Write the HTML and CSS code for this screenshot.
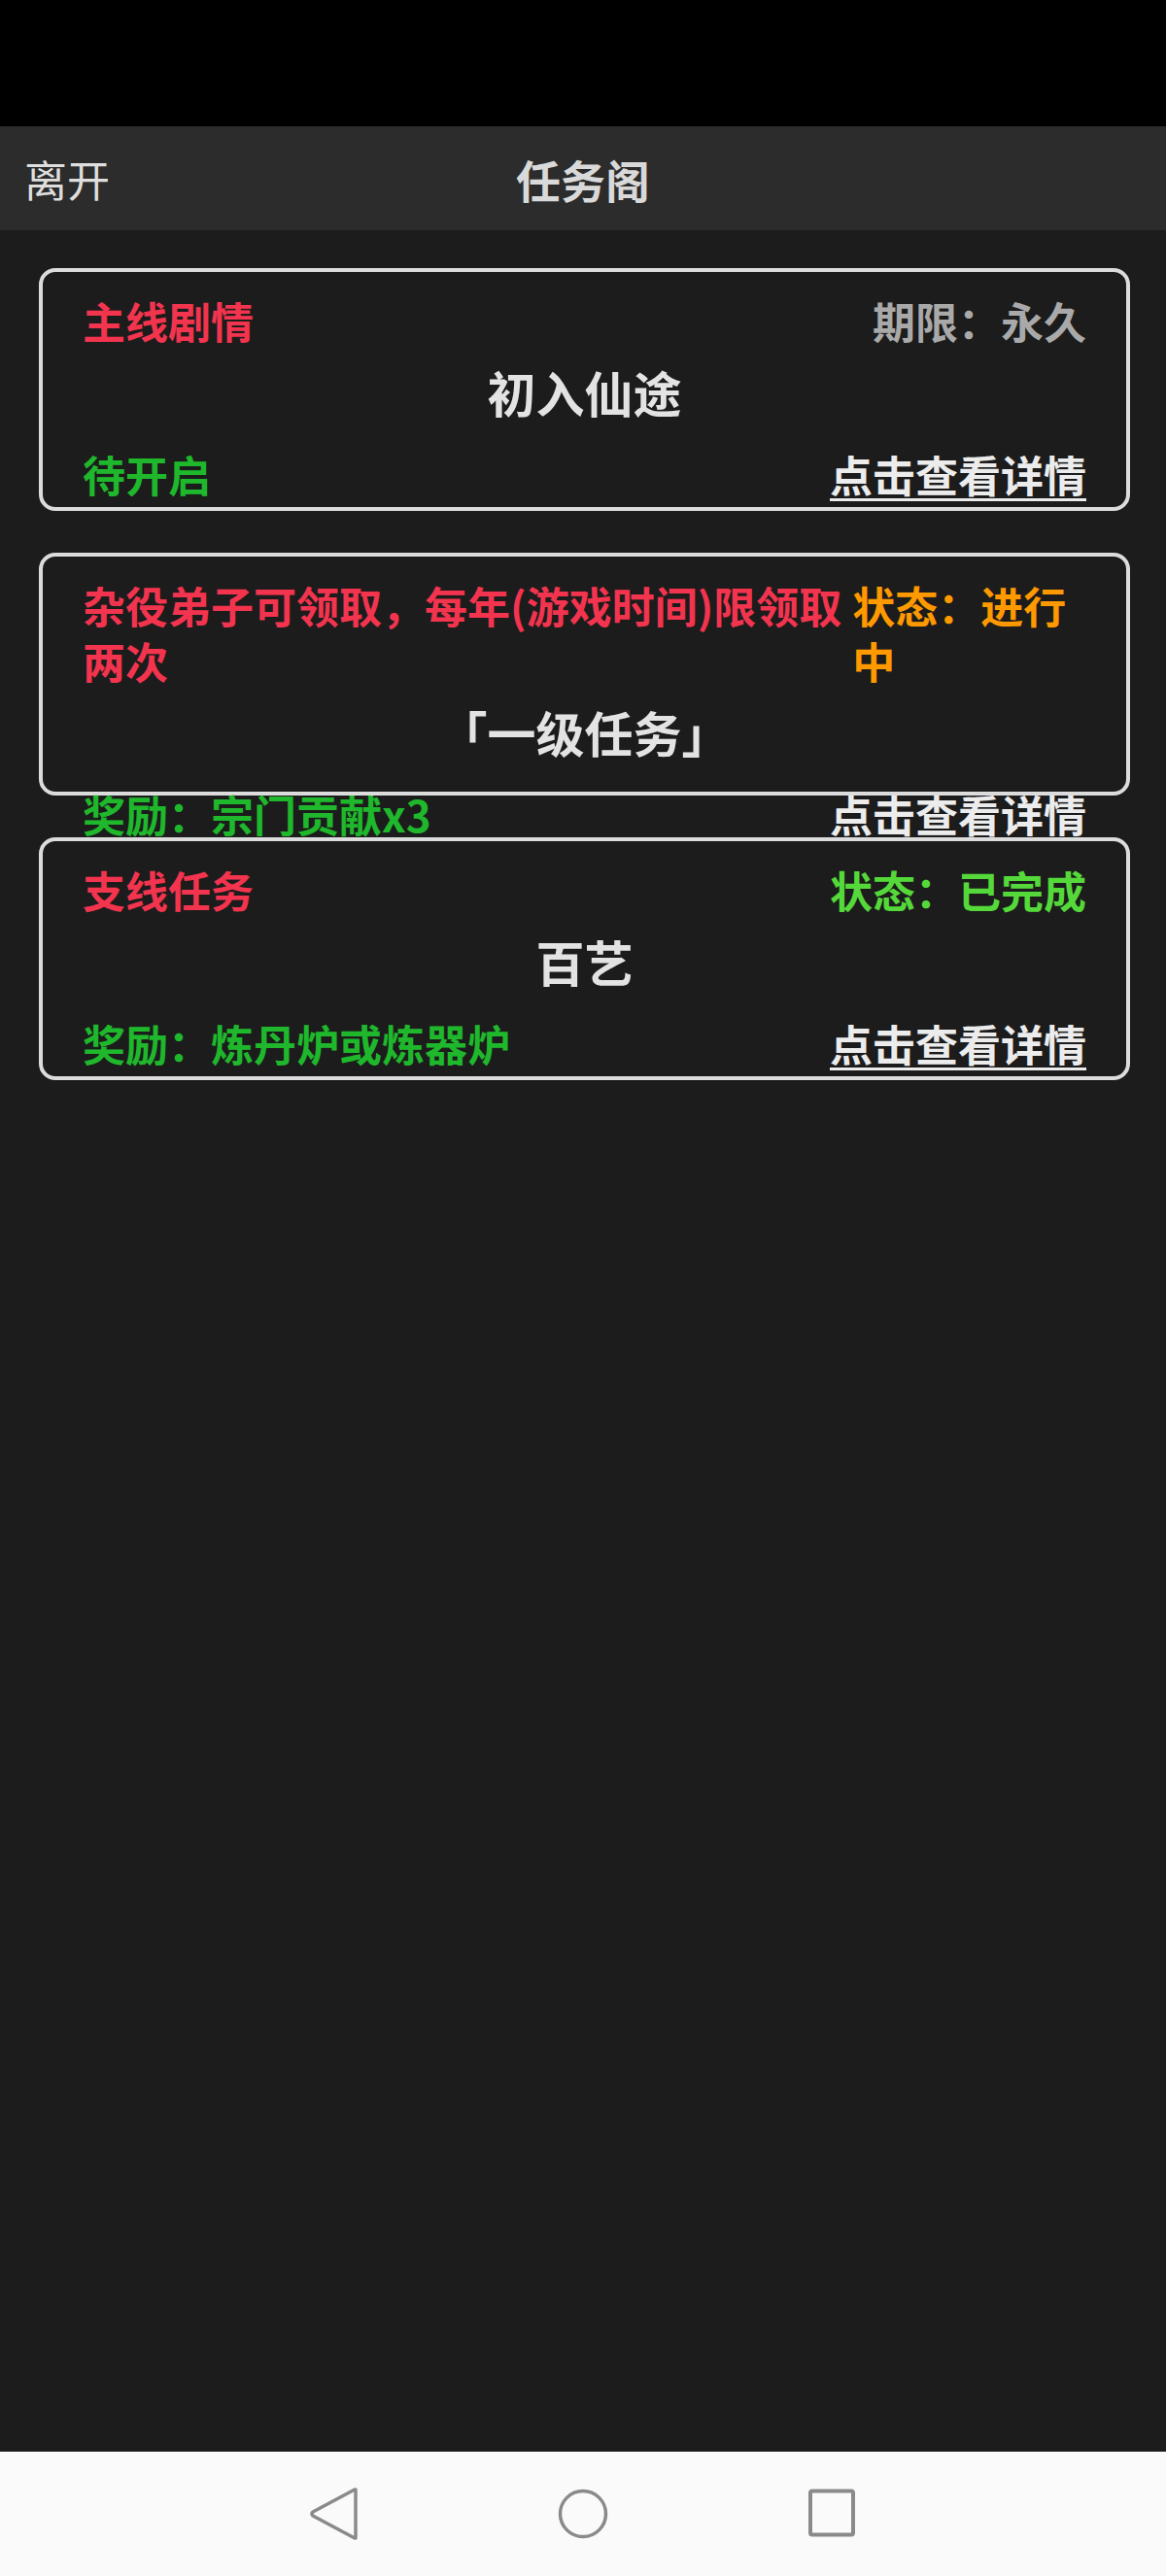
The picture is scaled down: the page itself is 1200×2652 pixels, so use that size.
FILE: index.html
```html
<!DOCTYPE html>
<html lang="zh-CN">
<head>
<meta charset="utf-8">
<title>任务阁</title>
<link rel="stylesheet" href="styles.css">
</head>
<body>
<div class="screen">
  <div class="statusbar"></div>
  <header class="topbar">
    <span class="leave">离开</span>
    <span class="title">任务阁</span>
    <span></span>
  </header>
  <main class="list">
    <section class="card">
      <div class="row">
        <span class="tag red">主线剧情</span>
        <span class="meta gray">期限：永久</span>
      </div>
      <div class="name">初入仙途</div>
      <div class="row">
        <span class="tag green">待开启</span>
        <span class="link">点击查看详情</span>
      </div>
    </section>
    <section class="card">
      <div class="row">
        <span class="tag red">杂役弟子可领取，每年(游戏时间)限领取两次</span>
        <span class="meta orange">状态：进行中</span>
      </div>
      <div class="name">「一级任务」</div>
      <div class="row">
        <span class="tag green">奖励：宗门贡献x3</span>
        <span class="link">点击查看详情</span>
      </div>
    </section>
    <section class="card">
      <div class="row">
        <span class="tag red">支线任务</span>
        <span class="meta lime">状态：已完成</span>
      </div>
      <div class="name">百艺</div>
      <div class="row">
        <span class="tag green">奖励：炼丹炉或炼器炉</span>
        <span class="link">点击查看详情</span>
      </div>
    </section>
  </main>
  <nav class="navbar">
    <svg class="nav-icon" width="52" height="56" viewBox="0 0 52 56" aria-hidden="true">
      <path d="M47 3 L48 3 L48 53 L47 53 L4 30 Q2 28 4 26 Z" fill="none" stroke="#8a8a8a" stroke-width="3.5" stroke-linejoin="round"/>
    </svg>
    <svg class="nav-icon" width="52" height="56" viewBox="0 0 52 56" aria-hidden="true">
      <circle cx="26" cy="28" r="23.5" fill="none" stroke="#8a8a8a" stroke-width="3.5"/>
    </svg>
    <svg class="nav-icon" width="52" height="56" viewBox="0 0 52 56" aria-hidden="true">
      <rect x="4" y="4.5" width="44" height="45" rx="2" fill="none" stroke="#8a8a8a" stroke-width="4"/>
    </svg>
  </nav>
</div>
</body>
</html>
```

FILE: styles.css
```css
* {
  box-sizing: border-box;
}

html, body {
  margin: 0;
  padding: 0;
  background: #1c1c1c;
}

body {
  font-family: "Noto Sans CJK SC", "Noto Sans", sans-serif;
}

.screen {
  display: flex;
  flex-direction: column;
  min-height: 2652px;
}

.statusbar {
  height: 130px;
  background: #000;
}

.topbar {
  height: 107px;
  background: #2c2c2c;
  display: grid;
  grid-template-columns: 1fr auto 1fr;
  align-items: center;
  padding: 0 25px;
}

.leave {
  font-size: 44px;
  color: #dedede;
  font-weight: 400;
}

.title {
  font-size: 46px;
  font-weight: 700;
  color: #d9d9d9;
}

.list {
  flex: 1;
  padding-top: 39px;
}

.card {
  position: relative;
  background: #1c1c1c;
  height: 250px;
  margin: 0 37px 43px 40px;
  border: 4px solid #dcdcdc;
  border-radius: 17px;
  padding: 22px 41px 0;
}

.row {
  display: flex;
  justify-content: space-between;
  font-size: 44px;
  line-height: 57px;
  font-weight: 700;
}

.name {
  text-align: center;
  font-size: 50px;
  line-height: 66px;
  font-weight: 700;
  color: #e3e3e3;
  margin: 11px 0 24px;
}

.red { color: #f3344f; }
.green { color: #1fb72c; }
.gray { color: #a9a9a9; }
.orange { color: #ff9900; }
.lime { color: #55d83a; }

.link {
  color: #ececec;
  text-decoration: underline;
  text-decoration-thickness: 3px;
  text-underline-offset: 6px;
}

.navbar {
  height: 128px;
  background: #fafafa;
  display: flex;
  justify-content: center;
  align-items: center;
  gap: 204px;
}

.nav-icon {
  display: block;
}
```
